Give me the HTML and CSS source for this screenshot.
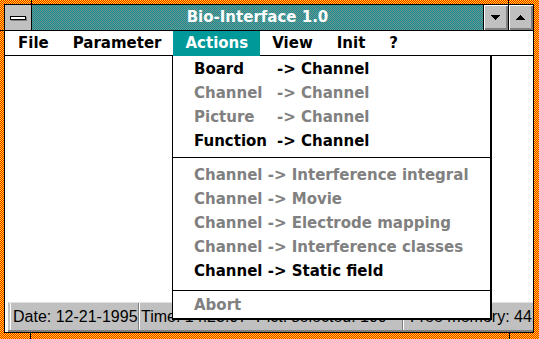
FILE: index.html
```html
<!DOCTYPE html>
<html lang="en">
<head>
<meta charset="utf-8">
<title>Bio-Interface 1.0</title>
<link rel="stylesheet" href="styles.css">
</head>
<body>
<div class="frame">
	<div class="window">
		<div class="titlebar">
			<div class="sysbox"><span class="sysbar"></span></div>
			<div class="caption">Bio-Interface 1.0</div>
			<div class="tbtn tbtn-min">
				<svg width="9" height="5" viewBox="0 0 9 5" shape-rendering="crispEdges"><polygon points="0,0 9,0 4.5,5" fill="#000"/></svg>
			</div>
			<div class="tbtn">
				<svg width="9" height="5" viewBox="0 0 9 5" shape-rendering="crispEdges"><polygon points="4.5,0 9,5 0,5" fill="#000"/></svg>
			</div>
		</div>
		<ul class="menubar">
			<li>File</li>
			<li>Parameter</li>
			<li class="active">Actions</li>
			<li>View</li>
			<li>Init</li>
			<li>?</li>
		</ul>
		<div class="client">
			<div class="workspace"></div>
			<div class="statusbar">
				<div class="panel panel-date">Date: 12-21-1995</div>
				<div class="panel panel-time">Time: 14:23:07 &nbsp;Pict. selected: 100</div>
				<div class="panel panel-mem">Free memory: 4413 KB</div>
			</div>
		</div>
		<div class="dropdown">
			<div class="item"><span class="lbl">Board</span>-&gt; Channel</div>
			<div class="item off"><span class="lbl">Channel</span>-&gt; Channel</div>
			<div class="item off"><span class="lbl">Picture</span>-&gt; Channel</div>
			<div class="item"><span class="lbl">Function</span>-&gt; Channel</div>
			<div class="sep"></div>
			<div class="item off">Channel -&gt; Interference integral</div>
			<div class="item off">Channel -&gt; Movie</div>
			<div class="item off">Channel -&gt; Electrode mapping</div>
			<div class="item off">Channel -&gt; Interference classes</div>
			<div class="item">Channel -&gt; Static field</div>
			<div class="sep sep-last"></div>
			<div class="item off">Abort</div>
		</div>
	</div>
</div>
</body>
</html>
```

FILE: styles.css
```css
html, body {
	margin: 0;
	padding: 0;
	width: 539px;
	height: 339px;
	overflow: hidden;
	background: #fff;
}

.frame {
	box-sizing: border-box;
	width: 539px;
	height: 339px;
	padding: 4px 5px 6px 4px;
	background:
		linear-gradient(#000, #000) 31px 0 / 1px 4px no-repeat,
		linear-gradient(#000, #000) 508px 0 / 1px 4px no-repeat,
		linear-gradient(#000, #000) 30px 100% / 1px 6px no-repeat,
		linear-gradient(#000, #000) 509px 100% / 1px 6px no-repeat,
		linear-gradient(#000, #000) 0 30px / 4px 1px no-repeat,
		repeating-conic-gradient(#ff0000 0 25%, #ffff00 0 50%) 0 0 / 2px 2px;
}

.window {
	position: relative;
	height: 100%;
	border: 1px solid #000;
	box-sizing: border-box;
	background: #fff;
	display: flex;
	flex-direction: column;
}

.titlebar {
	display: flex;
	height: 25px;
	border-bottom: 1px solid #000;
	flex: none;
}

.sysbox {
	width: 26px;
	border-right: 1px solid #000;
	background: #c0c0c0;
	display: flex;
	align-items: center;
	justify-content: center;
}

.sysbar {
	width: 14px;
	height: 2px;
	background: #fff;
	border: 1px solid #000;
	box-shadow: 1px 1px 0 #808080;
}

.caption {
	flex: 1;
	border-right: 1px solid #000;
	background: repeating-conic-gradient(#009999 0 25%, #808888 0 50%) 0 0 / 2px 2px;
	color: #fff;
	font: bold 15px "DejaVu Sans", sans-serif;
	text-align: center;
	line-height: 25px;
}

.tbtn {
	width: 24px;
	background: #c0c0c0;
	display: flex;
	align-items: center;
	justify-content: center;
	box-shadow: inset 1px 1px 0 #fff, inset -1px -1px 0 #808080, inset -2px -2px 0 #808080;
}

.tbtn svg {
	display: block;
	margin: -1px 1px 0 0;
}

.tbtn-min {
	border-right: 1px solid #000;
}

.menubar {
	display: flex;
	list-style: none;
	margin: 0;
	padding: 0 0 0 1px;
	height: 24px;
	border-bottom: 1px solid #000;
	flex: none;
	font: bold 15px "DejaVu Sans", sans-serif;
	color: #000;
}

.menubar li {
	padding: 0 12px;
	line-height: 24px;
}

.menubar li.active {
	background: #009999;
	color: #fff;
	height: 25px;
	position: relative;
	z-index: 1;
}

.client {
	flex: 1;
	display: flex;
	flex-direction: column;
}

.workspace {
	flex: 1;
	background: #fff;
}

.statusbar {
	height: 30px;
	box-sizing: border-box;
	margin-left: 3px;
	padding-left: 2px;
	background: #c0c0c0;
	border-top: 1px solid #e0e0e0;
	border-bottom: 2px solid #808080;
	display: flex;
	font: 16px "Liberation Sans", Arial, sans-serif;
	color: #000;
}

.panel {
	box-sizing: border-box;
	border-left: 1px solid #fff;
	border-right: 1px solid #808080;
	line-height: 28px;
	white-space: nowrap;
}

.panel-date {
	width: 129px;
	padding-left: 2px;
}

.panel-time {
	width: 264px;
	padding-left: 1px;
	overflow: hidden;
}

.panel-mem {
	flex: 1;
	padding-left: 6px;
	overflow: hidden;
	border-right: 0;
}

/* popup menu under "Actions" */
.dropdown {
	position: absolute;
	left: 167px;
	top: 50px;
	width: 317px;
	padding: 2px 0 1px;
	background: #fff;
	border-left: 1px solid #000;
	border-right: 2px solid #000;
	border-bottom: 2px solid #000;
	border-top: 1px solid #000;
	font: bold 15px "DejaVu Sans", sans-serif;
	color: #000;
}

.item {
	height: 24px;
	line-height: 24px;
	padding-left: 21px;
	white-space: nowrap;
}

.item:first-child {
	margin-top: -1px;
}

.item.off {
	color: #808080;
}

.lbl {
	display: inline-block;
	width: 83px;
}

.sep {
	height: 1px;
	background: #000;
	margin: 4px 0 5px;
}

.sep-last {
	margin: 7px 0 2px;
}
```
